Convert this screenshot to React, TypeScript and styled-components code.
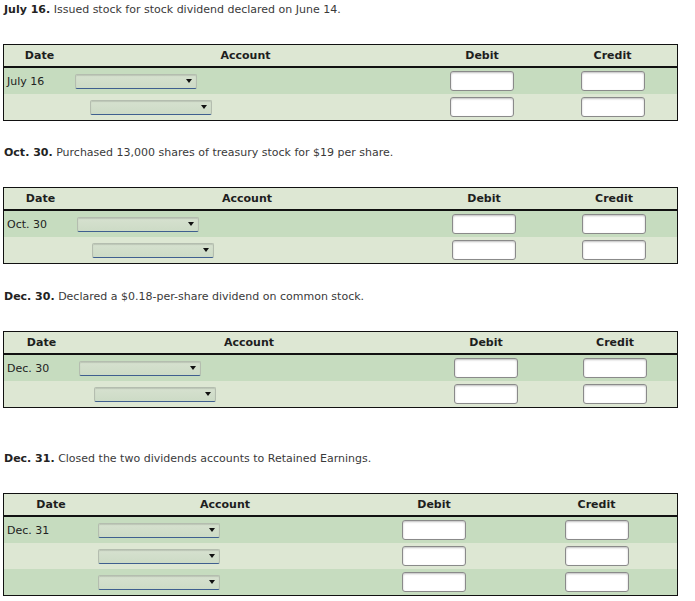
import React from 'react';
import styled, { createGlobalStyle } from 'styled-components';

const GlobalStyle = createGlobalStyle`
  html, body {
    margin: 0;
    padding: 0;
    background: #fff;
  }
  body {
    font-family: "DejaVu Sans", Verdana, sans-serif;
    font-size: 11px;
    color: #333;
  }
`;

const Page = styled.div`
  width: 695px;
  padding: 2px 0 0 3px;
  box-sizing: border-box;
`;

const Section = styled.section<{ $gap: number }>`
  margin-top: ${({ $gap }) => $gap}px;
`;

const Prompt = styled.p`
  margin: 0 0 26px 1px;
  line-height: 16px;
  font-size: 11px;
  color: #3a3a3a;

  b {
    color: #222;
  }
`;

const Journal = styled.div`
  width: 675px;
  box-sizing: border-box;
  border: 1px solid #111;
`;

const Row = styled.div<{ $cols: string; $shade?: 'head' | 'dark' | 'light' }>`
  display: grid;
  grid-template-columns: ${({ $cols }) => $cols};
  align-items: center;
  height: ${({ $shade }) => ($shade === 'head' ? '21px' : '26px')};
  background: ${({ $shade }) =>
    $shade === 'dark' ? '#c6dcbf' : '#dde7d3'};
  border-bottom: ${({ $shade }) => ($shade === 'head' ? '2px solid #111' : 'none')};
`;

const HeadCell = styled.div`
  text-align: center;
  font-weight: bold;
  color: #1e1e1e;
  font-size: 11px;
`;

const DateCell = styled.div`
  padding-left: 3px;
  color: #222;
`;

const AccountCell = styled.div<{ $indent: number }>`
  padding-left: ${({ $indent }) => $indent}px;
  display: flex;
  align-items: center;
`;

const AmountCell = styled.div`
  display: flex;
  justify-content: center;
`;

const Select = styled.div`
  position: relative;
  width: 122px;
  height: 15px;
  box-sizing: border-box;
  border: 1px solid #b4bdaf;
  border-bottom: 1px solid #3f5f8f;
  border-radius: 2px;
  background: linear-gradient(#d6e1cf, #cddbc6);
  box-shadow: inset 0 1px 1px rgba(0, 0, 0, 0.12);

  &::after {
    content: '';
    position: absolute;
    right: 4px;
    top: 4px;
    border-left: 3px solid transparent;
    border-right: 3px solid transparent;
    border-top: 4px solid #111;
  }
`;

const Amount = styled.div`
  width: 64px;
  height: 20px;
  box-sizing: border-box;
  background: #fff;
  border: 1px solid #8a8a8a;
  border-radius: 3px;
  box-shadow: inset 0 1px 2px rgba(0, 0, 0, 0.25);
`;

interface Entry {
  date: string;
  text: string;
  gap: number;
  cols: string;
  lines: number;
  indent: boolean;
}

const entries: Entry[] = [
  { date: 'July 16', text: 'Issued stock for stock dividend declared on June 14.', gap: 0, cols: '71px 341px 132px 129px', lines: 2, indent: true },
  { date: 'Oct. 30', text: 'Purchased 13,000 shares of treasury stock for $19 per share.', gap: 24, cols: '73px 340px 134px 126px', lines: 2, indent: true },
  { date: 'Dec. 30', text: 'Declared a $0.18-per-share dividend on common stock.', gap: 25, cols: '75px 340px 134px 124px', lines: 2, indent: true },
  { date: 'Dec. 31', text: 'Closed the two dividends accounts to Retained Earnings.', gap: 43, cols: '94px 254px 164px 161px', lines: 3, indent: false },
];

const JournalEntry: React.FC<{ entry: Entry }> = ({ entry }) => (
  <Section $gap={entry.gap}>
    <Prompt>
      <b>{entry.date}.</b> {entry.text}
    </Prompt>
    <Journal>
      <Row $cols={entry.cols} $shade="head">
        <HeadCell>Date</HeadCell>
        <HeadCell>Account</HeadCell>
        <HeadCell>Debit</HeadCell>
        <HeadCell>Credit</HeadCell>
      </Row>
      {Array.from({ length: entry.lines }).map((_, i) => (
        <Row key={i} $cols={entry.cols} $shade={i % 2 === 0 ? 'dark' : 'light'}>
          <DateCell>{i === 0 ? entry.date : ''}</DateCell>
          <AccountCell $indent={entry.indent && i > 0 ? 15 : 0}>
            <Select />
          </AccountCell>
          <AmountCell>
            <Amount />
          </AmountCell>
          <AmountCell>
            <Amount />
          </AmountCell>
        </Row>
      ))}
    </Journal>
  </Section>
);

const App: React.FC = () => (
  <Page>
    <GlobalStyle />
    {entries.map((e) => (
      <JournalEntry key={e.date} entry={e} />
    ))}
  </Page>
);

export default App;
